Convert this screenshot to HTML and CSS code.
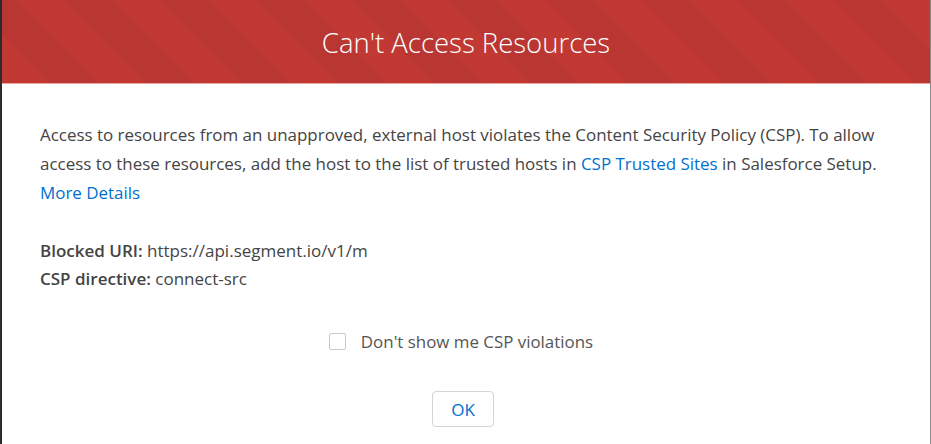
FILE: index.html
```html
<!DOCTYPE html>
<html lang="en">
  <head>
    <meta charset="UTF-8" />
    <meta name="viewport" content="width=device-width, initial-scale=1.0" />
    <title>CSP</title>
    <link rel="stylesheet" href="styles.css">
  </head>
  <body>
    <div class="modal">
      <div class="modal-header">
        <h2 class="modal-title">Can't Access Resources</h2>
      </div>
      <div class="modal-body">
        <p class="intro">Access to resources from an unapproved, external host violates the Content Security Policy (CSP). To allow access to these resources, add the host to the list of trusted hosts in <a href="#">CSP Trusted Sites</a> in Salesforce Setup.</p>
        <p class="intro"><a href="#">More Details</a></p>
        <div class="details">
          <p><b>Blocked URI:</b> https://api.segment.io/v1/m</p>
          <p><b>CSP directive:</b> connect-src</p>
        </div>
        <label class="check">
          <span class="box"></span>
          <span>Don't show me CSP violations</span>
        </label>
        <div class="footer">
          <button class="ok">OK</button>
        </div>
      </div>
    </div>
  </body>
</html>
```

FILE: styles.css
```css
* {
  margin: 0;
  padding: 0;
  box-sizing: border-box;
}
body {
  background-color: white;
  font-family: "Open Sans", "Noto Sans", sans-serif;
  color: #444444;
}
.modal {
  height: 444px;
  border-left: 2px solid #2b2b2b;
  border-right: 1px solid #8a8a8a;
  overflow: hidden;
}
.modal-header {
  height: 84px;
  display: flex;
  align-items: center;
  justify-content: center;
  background-color: #c23934;
  background-image: repeating-linear-gradient(45deg, #c23934 0, #c23934 34px, #b93632 34px, #b93632 68px);
  border-bottom: 1px solid #e8a5a3;
}
.modal-title {
  color: white;
  font-weight: 300;
  font-size: 27.5px;
  margin-top: 2px;
}
.modal-body {
  padding: 36px 44px 0 38px;
}
.intro {
  font-size: 16.95px;
  line-height: 29px;
}
a {
  color: #0070d2;
  text-decoration: none;
}
.details {
  margin-top: 30px;
  font-size: 17px;
  line-height: 28px;
}
.details b {
  font-weight: 600;
}
.check {
  margin-top: 34px;
  height: 28px;
  display: flex;
  align-items: center;
  justify-content: center;
  gap: 15px;
  font-size: 16.9px;
  color: #555555;
  padding-right: 4px;
}
.box {
  width: 17px;
  height: 17px;
  border: 1px solid #c9c9c9;
  border-radius: 2px;
  background: white;
}
.footer {
  margin-top: 36px;
  display: flex;
  justify-content: center;
}
.ok {
  width: 62px;
  height: 36px;
  border: 1px solid #d4d4d4;
  border-radius: 4px;
  background: white;
  color: #0070d2;
  font-family: "Open Sans", "Noto Sans", sans-serif;
  font-size: 17px;
}
```
